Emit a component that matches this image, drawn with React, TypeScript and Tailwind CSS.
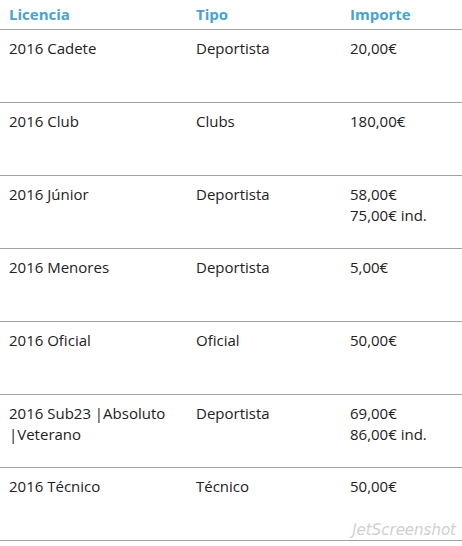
const rows = [
  { lic: ["2016 Cadete"], tipo: "Deportista", imp: ["20,00€"] },
  { lic: ["2016 Club"], tipo: "Clubs", imp: ["180,00€"] },
  { lic: ["2016 Júnior"], tipo: "Deportista", imp: ["58,00€", "75,00€ ind."] },
  { lic: ["2016 Menores"], tipo: "Deportista", imp: ["5,00€"] },
  { lic: ["2016 Oficial"], tipo: "Oficial", imp: ["50,00€"] },
  { lic: ["2016 Sub23 |Absoluto", "|Veterano"], tipo: "Deportista", imp: ["69,00€", "86,00€ ind."] },
  { lic: ["2016 Técnico"], tipo: "Técnico", imp: ["50,00€"] },
];

export default function App() {
  return (
    <div className="relative w-[462px] h-[546px] bg-white text-[#222] font-['Open_Sans',sans-serif]">
      <div className="grid grid-cols-[187px_154px_1fr] h-[30px] border-b border-[#a3a3a3] text-[15px] font-bold text-[#46a3d4] leading-[28px]">
        <div className="pl-[9px]">Licencia</div>
        <div className="pl-[9px]">Tipo</div>
        <div className="pl-[9px]">Importe</div>
      </div>
      {rows.map((r, i) => (
        <div key={i} className="grid grid-cols-[187px_154px_1fr] h-[73px] border-b border-[#a3a3a3] pt-[8px] text-[15px] leading-[21px]">
          <div className="pl-[9px]">
            {r.lic.map((l) => (
              <div key={l}>{l}</div>
            ))}
          </div>
          <div className="pl-[9px]">{r.tipo}</div>
          <div className="pl-[9px]">
            {r.imp.map((l) => (
              <div key={l}>{l}</div>
            ))}
          </div>
        </div>
      ))}
      <div className="absolute right-[6px] bottom-[5px] text-[15px] italic text-[#d0d0d0] font-['DejaVu_Sans',sans-serif]">
        JetScreenshot
      </div>
    </div>
  );
}
